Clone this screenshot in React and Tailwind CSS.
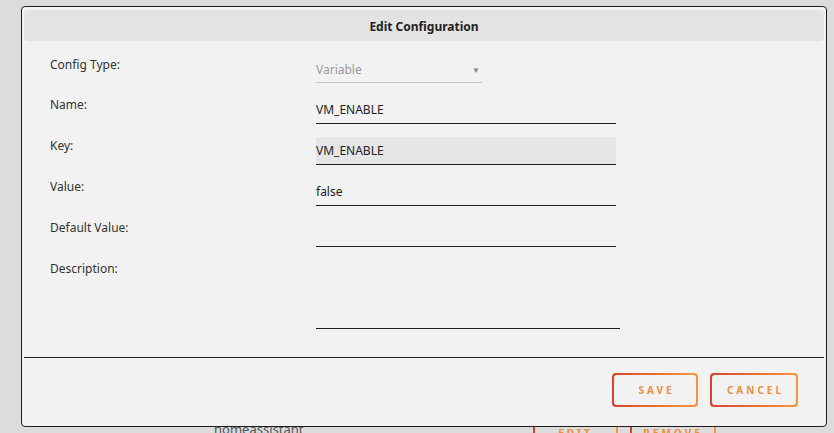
import React from "react";

const fields = [
  { label: "Name:", value: "VM_ENABLE" },
  { label: "Key:", value: "VM_ENABLE", readOnly: true },
  { label: "Value:", value: "false" },
  { label: "Default Value:", value: "" },
];

function GradientButton({ children, width }) {
  return (
    <div
      className={`rounded-[4px] bg-gradient-to-r from-[#d8402f] to-[#f4983c] p-[2px] ${width}`}
    >
      <div className="flex h-[30px] items-center justify-center rounded-[3px] bg-[#f2f2f2] pl-[3px] text-[10px] font-bold tracking-[3px] text-[#ee8f3f]">
        {children}
      </div>
    </div>
  );
}

export default function App() {
  return (
    <div
      className="relative h-[433px] w-[834px] overflow-hidden bg-[#dcdcdc]"
      style={{ fontFamily: '"Noto Sans", "Open Sans", sans-serif' }}
    >
      {/* list row peeking out below the dialog */}
      <div className="flex items-start pt-[420px] text-[#555]">
        <div className="w-[214px]" />
        <div className="w-[319px] text-[13px] leading-[18px]">homeassistant</div>
        <div className="flex h-[26px] w-[85px] items-center justify-center border-x-2 border-l-[#d8402f] border-r-[#f4983c] text-[10px] font-bold tracking-[3px] text-[#ee8f3f]">
          EDIT
        </div>
        <div className="w-[12px]" />
        <div className="flex h-[26px] w-[86px] items-center justify-center border-x-2 border-l-[#d8402f] border-r-[#f4983c] text-[10px] font-bold tracking-[3px] text-[#ee8f3f]">
          REMOVE
        </div>
      </div>

      {/* dialog */}
      <div className="absolute left-[21px] top-[6px] flex h-[421px] w-[806px] flex-col rounded-[4px] border border-[#1e1e1e] bg-[#f2f2f2] px-[2px] pt-[3px]">
        <div className="flex h-[31px] items-center justify-center rounded-[4px] bg-[#e3e3e3] pt-[2px] text-[12px] font-bold text-[#222]">
          Edit Configuration
        </div>

        <div className="flex flex-col gap-[13px] pl-[26px] pt-[15px]">
          <div className="flex">
            <div className="w-[266px] pt-[1px] text-[12px] leading-[16px] text-[#333]">
              Config Type:
            </div>
            <div className="flex h-[27px] w-[166px] items-center justify-between border-b border-[#c8c8c8] pt-[1px] text-[12px] text-[#9a9a9a]">
              <span>Variable</span>
              <span className="pr-[2px] text-[8px] text-[#888]">▼</span>
            </div>
          </div>

          {fields.map((f) => (
            <div key={f.label} className="flex">
              <div className="w-[266px] pt-[1px] text-[12px] leading-[16px] text-[#333]">
                {f.label}
              </div>
              <div
                className={`flex h-[28px] w-[300px] items-center border-b border-[#1e1e1e] text-[12px] text-[#222] ${
                  f.readOnly ? "bg-[#e6e6e6]" : ""
                }`}
              >
                {f.value}
              </div>
            </div>
          ))}

          <div className="flex">
            <div className="w-[266px] pt-[1px] text-[12px] leading-[16px] text-[#333]">
              Description:
            </div>
            <div className="h-[69px] w-[304px] border-b border-[#1e1e1e]" />
          </div>
        </div>

        <div className="mt-[28px] border-t border-[#1e1e1e]" />

        <div className="flex justify-end gap-[12px] pr-[26px] pt-[15px]">
          <GradientButton width="w-[86px]">SAVE</GradientButton>
          <GradientButton width="w-[88px]">CANCEL</GradientButton>
        </div>
      </div>
    </div>
  );
}
